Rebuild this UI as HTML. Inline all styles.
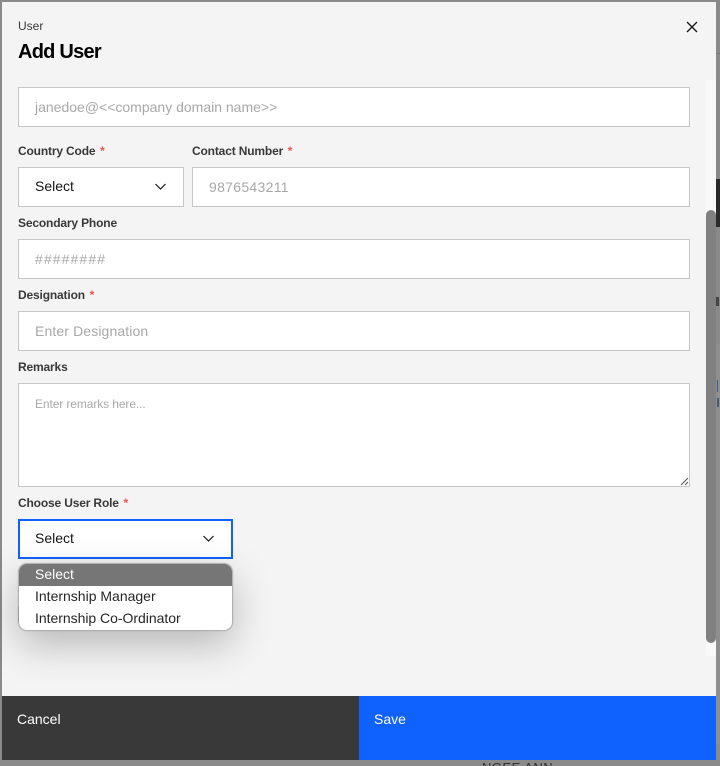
<!DOCTYPE html>
<html><head><meta charset="utf-8">
<style>
html,body{margin:0;padding:0;width:720px;height:766px;overflow:hidden;background:#8a8a8a;font-family:"Liberation Sans",sans-serif}
.a{position:absolute;box-sizing:border-box;white-space:nowrap}
.box{background:#fff;border:1px solid #c6c6c6}
.lbl{font-size:12px;font-weight:bold;color:#393939;height:16px;line-height:16px;left:18px;letter-spacing:-.16px}
.lbl i{font-style:normal;color:#f0554e;margin-left:1.5px}
.ph{font-size:14px;color:#a8a8a8;line-height:20px;height:20px}
.sel{font-size:14px;color:#161616;line-height:20px;height:20px}
.opt{left:0;width:100%;height:22px;line-height:20px;padding-left:16px;font-size:14px;color:#262626}
</style></head>
<body>
<div class="a" style="left:716px;top:179px;width:4px;height:48px;background:#2a2a2a"></div>
<div class="a" style="left:716px;top:344px;width:4px;height:400px;background:#8f8f8f"></div>
<div class="a" style="left:716px;top:297px;width:3px;height:9px;background:#444"></div>
<div class="a" style="left:717px;top:380px;width:1px;height:12px;background:#3c5a8a"></div>
<div class="a" style="left:717px;top:398px;width:2px;height:9px;background:#4a5a70"></div>
<div class="a" style="left:716px;top:53px;width:4px;height:1px;background:#777"></div>
<div class="a" style="left:482px;top:760px;font-size:13px;color:#333;line-height:16px;height:6px;overflow:hidden;letter-spacing:.5px">NGEE ANN</div>

<div class="a" style="left:2px;top:2px;width:714px;height:758px;background:#f4f4f4"></div>
<div class="a" style="left:706px;top:80px;width:10px;height:576px;background:#f9f9f9"></div>
<div class="a" style="left:706px;top:210px;width:10px;height:433px;background:#808080;border-radius:5px"></div>

<div class="a" style="left:18px;top:18px;font-size:12px;color:#393939;line-height:16px;height:16px">User</div>
<div class="a" style="left:18px;top:40px;font-size:20px;font-weight:bold;color:#000;line-height:24px;height:24px;letter-spacing:-.75px">Add User</div>
<svg class="a" style="left:685px;top:20px" width="14" height="14" viewBox="0 0 14 14"><path d="M2 2L12 12M12 2L2 12" stroke="#161616" stroke-width="1.3" fill="none"/></svg>

<div class="a box" style="left:18px;top:87px;width:672px;height:40px"></div>
<div class="a ph" style="left:35px;top:97px">janedoe@&lt;&lt;company domain name&gt;&gt;</div>

<div class="a lbl" style="top:143px">Country Code <i>*</i></div>
<div class="a lbl" style="top:143px;left:192px">Contact Number <i>*</i></div>
<div class="a box" style="left:18px;top:167px;width:166px;height:40px"></div>
<div class="a sel" style="left:35px;top:176px">Select</div>
<svg class="a" style="left:154px;top:182px" width="13" height="10" viewBox="0 0 13 10"><path d="M1.5 2L6.5 7L11.5 2" stroke="#161616" stroke-width="1.2" fill="none"/></svg>
<div class="a box" style="left:192px;top:167px;width:498px;height:40px"></div>
<div class="a ph" style="left:209px;top:177px;letter-spacing:.3px">9876543211</div>

<div class="a lbl" style="top:215px">Secondary Phone</div>
<div class="a box" style="left:18px;top:239px;width:672px;height:40px"></div>
<div class="a ph" style="left:35px;top:249px;letter-spacing:1.1px">########</div>

<div class="a lbl" style="top:287px">Designation <i>*</i></div>
<div class="a box" style="left:18px;top:311px;width:672px;height:40px"></div>
<div class="a ph" style="left:35px;top:321px;letter-spacing:.12px">Enter Designation</div>

<div class="a lbl" style="top:359px">Remarks</div>
<div class="a box" style="left:18px;top:383px;width:672px;height:104px"></div>
<div class="a ph" style="left:35px;top:394px;font-size:12px;letter-spacing:-.1px">Enter remarks here...</div>
<svg class="a" style="left:680px;top:477px" width="9" height="9" viewBox="0 0 9 9"><path d="M1 8L8 1M5 8L8 5" stroke="#555" stroke-width="1" fill="none"/></svg>

<div class="a lbl" style="top:495px">Choose User Role <i>*</i></div>
<div class="a" style="left:18px;top:519px;width:215px;height:40px;background:#fff;border:2px solid #0f62fe"></div>
<div class="a sel" style="left:35px;top:528px">Select</div>
<svg class="a" style="left:202px;top:534px" width="13" height="10" viewBox="0 0 13 10"><path d="M1.5 2L6.5 7L11.5 2" stroke="#161616" stroke-width="1.2" fill="none"/></svg>

<div class="a" style="left:18px;top:606px;width:2px;height:16px;background:#555"></div>
<div class="a" style="left:19px;top:564px;width:213px;height:66px;background:#fff;border-radius:8px;overflow:hidden;box-shadow:0 0 1px 1px #aaa,0 14px 40px rgba(0,0,0,.26)">
<div class="a opt" style="top:0;background:#767676;color:#fff">Select</div>
<div class="a opt" style="top:22px">Internship Manager</div>
<div class="a opt" style="top:44px;letter-spacing:-.03px">Internship Co-Ordinator</div>
</div>

<div class="a" style="left:2px;top:696px;width:357px;height:64px;background:#393939"></div>
<div class="a" style="left:359px;top:696px;width:357px;height:64px;background:#0f62fe"></div>
<div class="a" style="left:17px;top:709px;font-size:14px;color:#fff;line-height:20px;height:20px">Cancel</div>
<div class="a" style="left:374px;top:709px;font-size:14px;color:#fff;line-height:20px;height:20px">Save</div>
</body></html>
